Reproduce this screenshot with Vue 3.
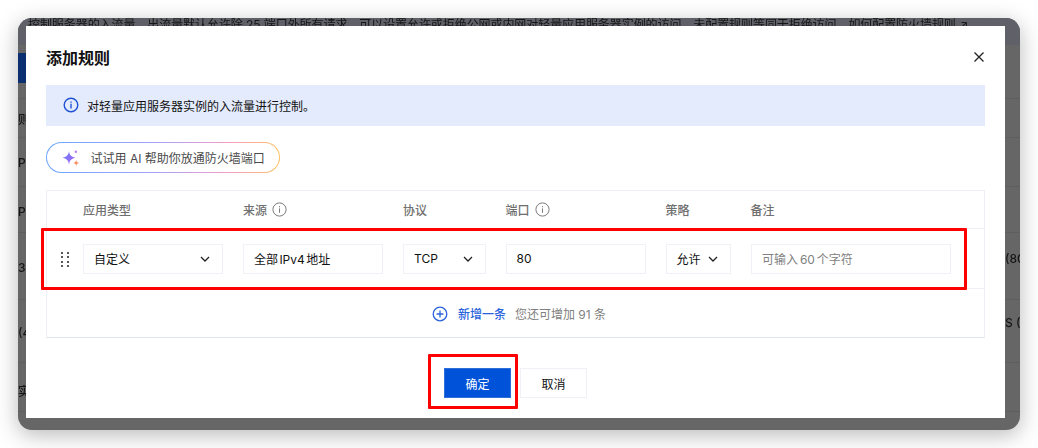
<script setup>
const bgRows = [
  { h: 54, left: '', right: '', nav: true },
  { h: 39, left: '则', right: '' },
  { h: 49, left: 'P', right: '' },
  { h: 46, left: 'P', right: '', lo: 4 },
  { h: 67, left: '30', right: '(80', lo: 3, ro: -15 },
  { h: 63, left: '(4', right: 'S (4', lo: 3, ro: -17 },
  { h: 49, left: '实', right: '', lo: 6 }
]
const columns = [
  { label: '应用类型' },
  { label: '来源', info: true },
  { label: '协议' },
  { label: '端口', info: true },
  { label: '策略' },
  { label: '备注' }
]
</script>

<template>
  <div class="page">
    <div class="window">
      <div class="notice">控制服务器的入流量，出流量默认允许除 25 端口外所有请求，可以设置允许或拒绝公网或内网对轻量应用服务器实例的访问，未配置规则等同于拒绝访问。如何配置防火墙规则 ↗</div>
      <div v-for="(r, i) in bgRows" :key="i" class="bg-row" :style="{ height: r.h + 'px' }">
        <span class="bg-left" :class="{ nav: r.nav }" :style="{ marginTop: (r.lo || 0) + 'px' }">{{ r.left }}</span>
        <span class="bg-right" :style="{ marginTop: (r.ro || 0) + 'px' }">{{ r.right }}</span>
      </div>

      <div class="modal">
        <div class="head">
          <h2 class="title">添加规则</h2>
          <svg class="close" width="12" height="12" viewBox="0 0 12 12"><path d="M1.5 1.5l9 9M10.5 1.5l-9 9" stroke="#222" stroke-width="1.3" fill="none"/></svg>
        </div>

        <div class="alert">
          <svg width="16" height="16" viewBox="0 0 16 16" fill="none"><circle cx="8" cy="8" r="6.8" stroke="#1f52d4" stroke-width="1.4"/><path d="M8 6.8v4.6" stroke="#1f52d4" stroke-width="1.4"/><path d="M8 4.4v1.3" stroke="#1f52d4" stroke-width="1.4"/></svg>
          <span>对轻量应用服务器实例的入流量进行控制。</span>
        </div>

        <div class="pill">
          <svg width="18" height="18" viewBox="0 0 18 18">
            <defs>
              <linearGradient id="spark" x1="0" y1="0" x2="1" y2="1"><stop offset="0" stop-color="#5f86f7"/><stop offset="1" stop-color="#b45cf2"/></linearGradient>
            </defs>
            <path d="M7 2C7.6 6 8.6 7.4 13.4 8.8 8.6 10.2 7.6 11.6 7 15.8 6.4 11.6 5.4 10.2.6 8.8 5.4 7.4 6.4 6 7 2Z" fill="url(#spark)"/>
            <path d="M14.2 10.8C14.4 12.7 15 13.4 17.2 14 15 14.6 14.4 15.3 14.2 17.2 14 15.3 13.4 14.6 11.2 14 13.4 13.4 14 12.7 14.2 10.8Z" fill="#fb8f62"/>
            <circle cx="13.8" cy="2.8" r="1.2" fill="#b57bf0"/>
          </svg>
          <span>试试用 AI 帮助你放通防火墙端口</span>
        </div>

        <div class="table">
          <div class="grid header">
            <div v-for="c in columns" :key="c.label" class="th">
              <span>{{ c.label }}</span>
              <svg v-if="c.info" width="15" height="15" viewBox="0 0 15 15" fill="none"><circle cx="7.5" cy="7.5" r="6.6" stroke="#7c7c7c"/><path d="M7.5 6.4v4.4M7.5 4.1v1.2" stroke="#7c7c7c"/></svg>
            </div>
          </div>
          <div class="grid row">
            <div class="drag"><i v-for="n in 8" :key="n"></i></div>
            <div class="field between">自定义
              <svg class="chev" width="10" height="6" viewBox="0 0 10 6"><path d="M1 1l4 4 4-4" stroke="#222" stroke-width="1.3" fill="none"/></svg>
            </div>
            <div class="field">全部 IPv4 地址</div>
            <div class="field between">TCP
              <svg class="chev" width="10" height="6" viewBox="0 0 10 6"><path d="M1 1l4 4 4-4" stroke="#222" stroke-width="1.3" fill="none"/></svg>
            </div>
            <div class="field">80</div>
            <div class="field between">允许
              <svg class="chev" width="10" height="6" viewBox="0 0 10 6"><path d="M1 1l4 4 4-4" stroke="#222" stroke-width="1.3" fill="none"/></svg>
            </div>
            <div class="field placeholder">可输入 60 个字符</div>
          </div>
          <div class="add">
            <svg width="16" height="16" viewBox="0 0 16 16" fill="none"><circle cx="8" cy="8" r="6.8" stroke="#2a63dc" stroke-width="1.3"/><path d="M8 4.6v6.8M4.6 8h6.8" stroke="#2a63dc" stroke-width="1.3"/></svg>
            <span class="add-link">新增一条</span>
            <span class="add-hint">您还可增加 91 条</span>
          </div>
        </div>

        <div class="footer">
          <button class="btn primary">确定</button>
          <button class="btn">取消</button>
        </div>

        <div class="mark mark-row"></div>
        <div class="mark mark-btn"></div>
      </div>
    </div>
  </div>
</template>

<style>
html, body { margin: 0; background: #fff; }
</style>

<style scoped>
.page {
  width: 1038px;
  height: 448px;
  padding: 18px;
  box-sizing: border-box;
  font-family: "Inter", "Noto Sans CJK SC", sans-serif;
  font-size: 12px;
  color: #111;
  overflow: hidden;
  filter: blur(0.35px);
}
.window {
  position: relative;
  width: 1002px;
  height: 412px;
  border-radius: 14px;
  overflow: hidden;
  background: #666;
  box-shadow: 0 5px 22px rgba(0, 0, 0, .28);
}
.notice {
  height: 27px;
  padding: 1px 0 0 10px;
  box-sizing: border-box;
  background: #5f6068;
  line-height: 12px;
  white-space: nowrap;
  overflow: hidden;
  color: #151515;
  letter-spacing: -0.07px;
}
.bg-row {
  display: flex;
  justify-content: space-between;
  align-items: center;
  box-sizing: border-box;
  border-bottom: 1px solid #5e5e5e;
  color: #151515;
  font-weight: 500;
}
.bg-left { width: 8px; overflow: hidden; white-space: nowrap; }
.bg-left.nav { height: 30px; background: #0b2e70; margin-bottom: 8px; }
.bg-right { width: 15px; overflow: hidden; white-space: nowrap; }

.modal {
  position: absolute;
  left: 8px;
  top: 8px;
  width: 979px;
  height: 392px;
  padding: 0 20px;
  box-sizing: border-box;
  background: #fff;
}
.head {
  height: 59px;
  display: flex;
  justify-content: space-between;
  align-items: center;
  padding: 2px 0 0;
  box-sizing: border-box;
}
.title {
  margin: 0;
  font-size: 16px;
  font-weight: 700;
  color: #111;
}
.close { margin-right: 0; }
.alert {
  height: 40.5px;
  background: #e3ebfc;
  display: flex;
  align-items: center;
  gap: 8px;
  padding-left: 17px;
}
.pill {
  width: 234px;
  height: 31px;
  margin-top: 16.5px;
  box-sizing: border-box;
  display: flex;
  align-items: center;
  gap: 11px;
  padding-left: 14.5px;
  border: 1.5px solid transparent;
  border-radius: 16px;
  background:
    linear-gradient(#fff, #fff) padding-box,
    linear-gradient(90deg, #6aa5ff 0%, #a3a2fb 45%, #f29cc6 78%, #ffc261 100%) border-box;
  color: #4a4a4a;
}
.table {
  margin-top: 17px;
  height: 148px;
  box-sizing: border-box;
  border: 1px solid #eef0f5;
  border-bottom: 1px solid #dfe3ec;
  display: flex;
  flex-direction: column;
}
.grid {
  display: grid;
  grid-template-columns: 140px 140px 82.5px 140px 65px 200px;
  column-gap: 20px;
  padding-left: 36px;
  align-items: center;
}
.header { height: 38px; border-bottom: 1px solid #eef0f5; box-sizing: border-box; }
.th {
  display: flex;
  align-items: center;
  gap: 5px;
  color: #6f6f6f;
  font-weight: 500;
}
.row {
  position: relative;
  height: 60px;
  box-sizing: border-box;
  border-bottom: 1px solid #eef0f5;
}
.drag {
  position: absolute;
  left: 14px;
  top: 23px;
  display: grid;
  grid-template-columns: 2px 2px;
  grid-auto-rows: 2px;
  gap: 2.4px 3.5px;
}
.drag i { background: #222; border-radius: 50%; }
.field {
  height: 30px;
  box-sizing: border-box;
  border: 1.5px solid #eff1f6;
  display: flex;
  align-items: center;
  padding: 0 12px 0 10px;
  color: #111;
  word-spacing: -2px;
}
.between { justify-content: space-between; }
.placeholder { color: #808080; word-spacing: -1.5px; padding-left: 10.5px; }
.add {
  flex: 1;
  display: flex;
  align-items: center;
  justify-content: center;
  padding: 1px 0 0 7px;
}
.add-link { color: #2a63dc; margin-left: 10px; font-weight: 500; }
.add-hint { color: #808080; margin-left: 9px; }
.footer {
  margin-top: 30px;
  display: flex;
  justify-content: center;
  gap: 9.5px;
}
.btn {
  width: 66.5px;
  height: 30px;
  border: 1.5px solid #eff1f6;
  background: #fff;
  font: inherit;
  color: #111;
  padding: 0;
}
.btn.primary {
  background: #0052d9;
  border-color: #2f6fdc;
  color: #fff;
}
.mark {
  position: absolute;
  box-sizing: border-box;
  border: 3px solid #f00;
  border-radius: 1px;
}
.mark-row { left: 15px; top: 202px; width: 926px; height: 62px; }
.mark-btn { left: 402px; top: 328px; width: 90px; height: 55px; }
</style>
